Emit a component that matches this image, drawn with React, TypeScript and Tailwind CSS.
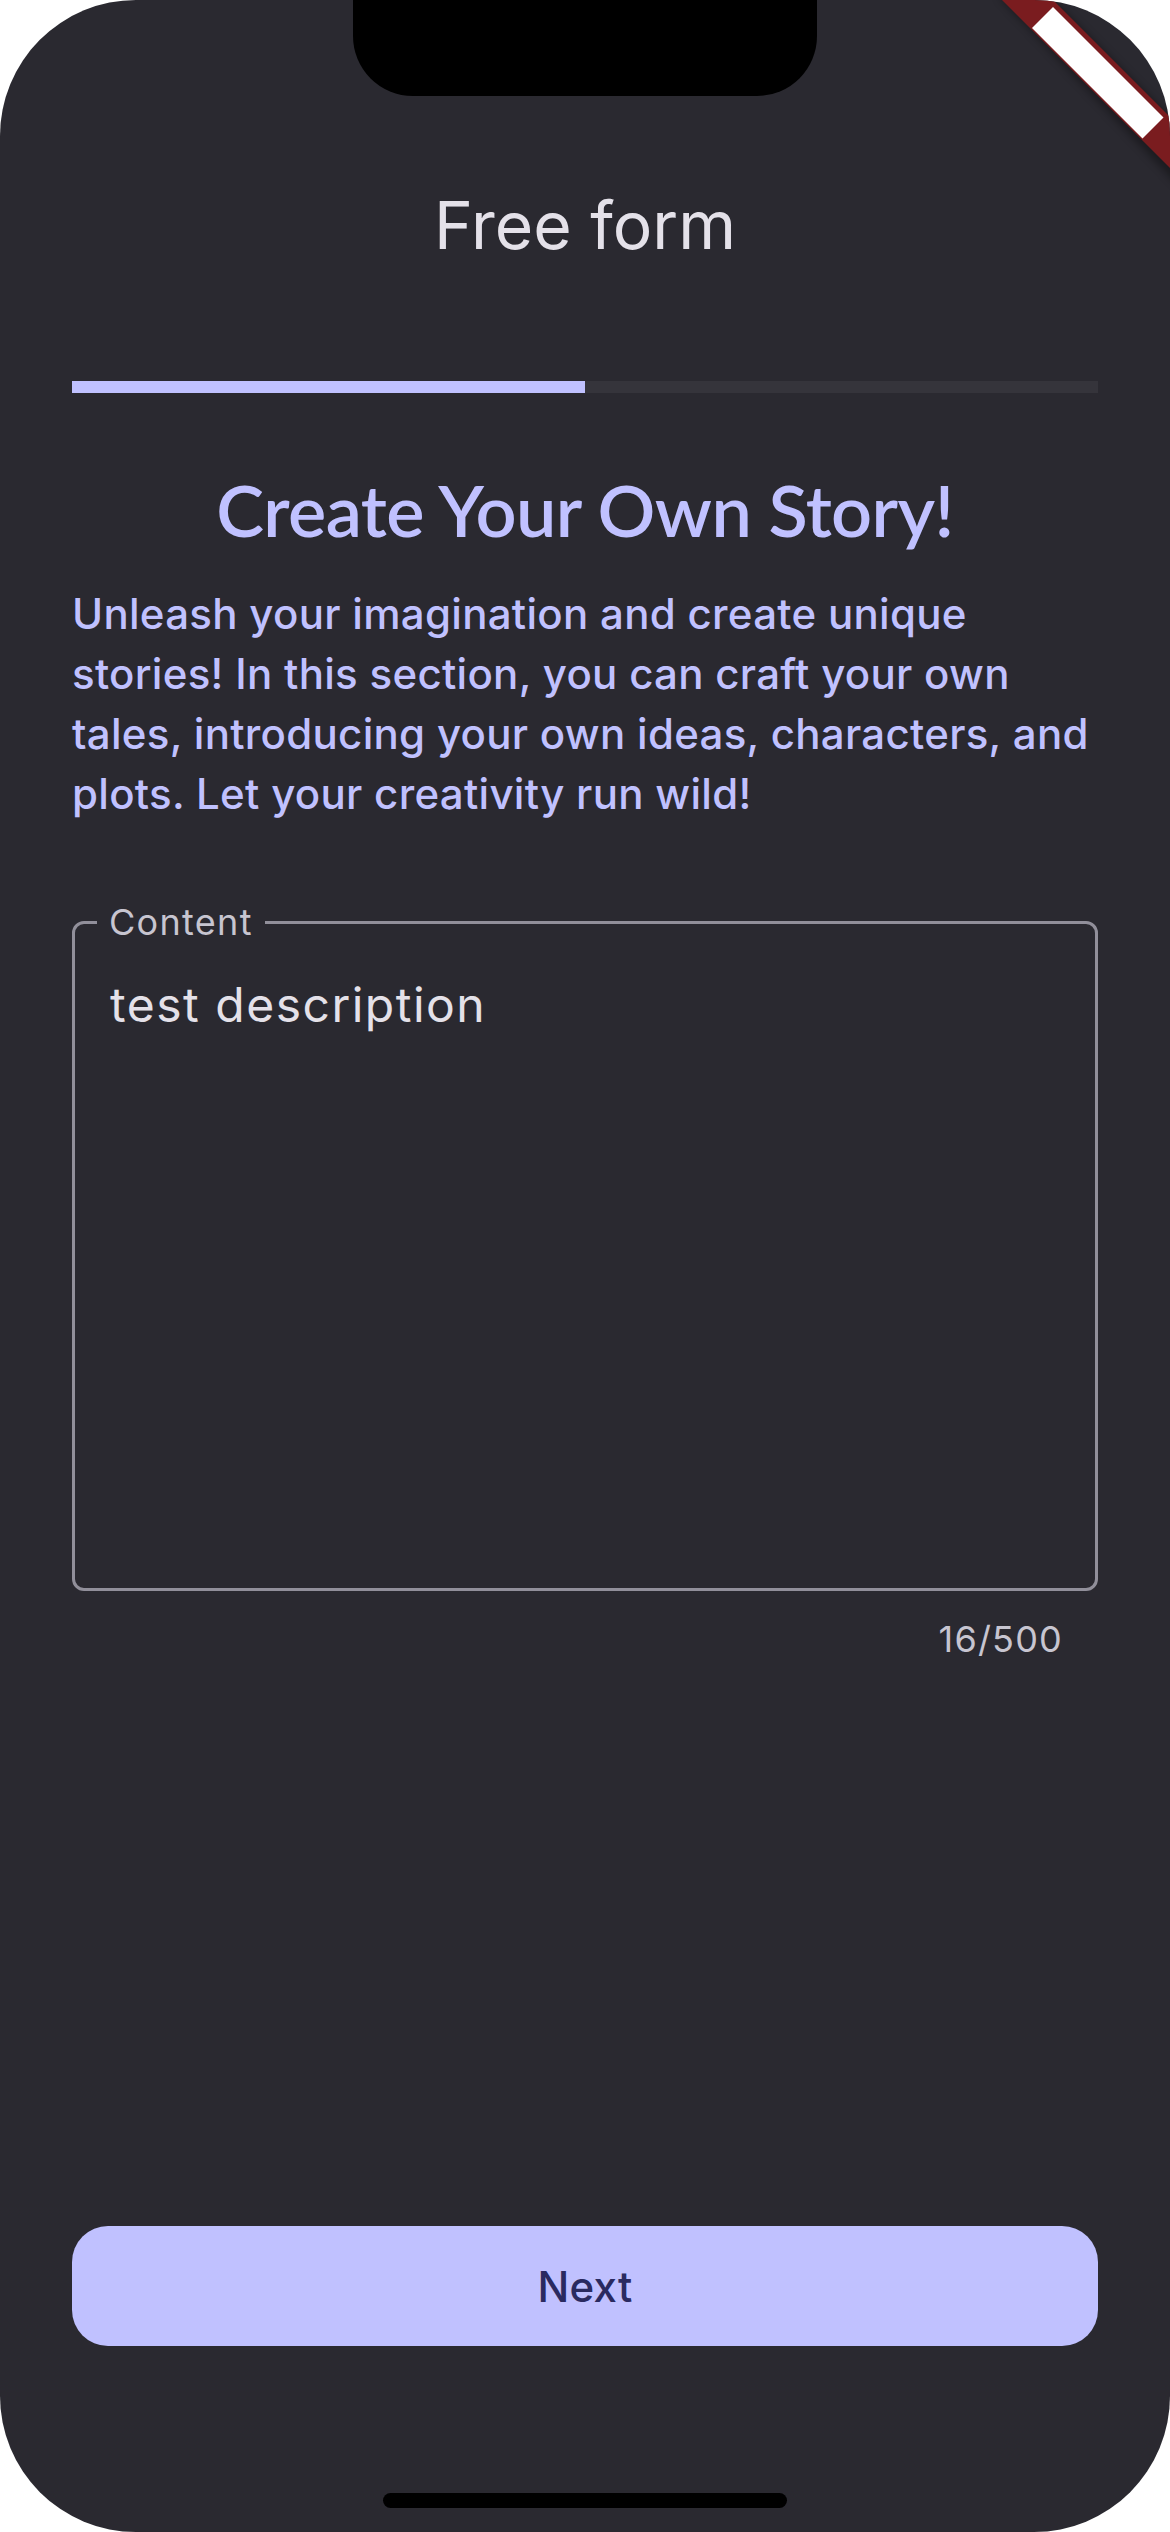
import React from "react";

const DebugBanner = () => (
  <svg
    className="absolute right-0 top-0"
    width="200"
    height="200"
    viewBox="0 0 200 200"
  >
    <defs>
      <filter id="bannerShadow" x="-20%" y="-20%" width="140%" height="140%">
        <feGaussianBlur stdDeviation="4" />
      </filter>
    </defs>
    <polygon
      points="28,-4 83,0 283,200 222,200"
      fill="#000000"
      opacity="0.35"
      filter="url(#bannerShadow)"
    />
    <polygon points="32,0 83,0 283,200 232,200" fill="#7a1c1f" />
    <polygon points="62,28 83,7 193.5,117.5 172.5,138.5" fill="#ffffff" />
  </svg>
);

export default function App() {
  return (
    <div className="relative h-[2532px] w-[1170px] bg-white">
      <div className="relative flex h-full flex-col overflow-hidden rounded-[136px] bg-[#2a2930] font-['Inter','Liberation_Sans',sans-serif]">
        {/* notch */}
        <div className="absolute left-[353px] top-0 h-[96px] w-[464px] rounded-b-[60px] bg-black" />
        <DebugBanner />

        {/* app bar */}
        <header className="mt-[141px] flex h-[168px] items-center justify-center">
          <h1 className="text-[66px] font-normal leading-[84px] text-[#e4e1e9]">
            Free form
          </h1>
        </header>

        <main className="px-[72px]">
          <div className="mt-[72px] flex h-[12px] w-full bg-[#35343b]">
            <div className="h-full w-1/2 bg-[#c0c1ff]" />
          </div>

          <h2 className="mt-[73px] text-center font-['Lato','Noto_Sans',sans-serif] text-[72px] font-semibold leading-[86px] tracking-[-0.6px] text-[#c0c1ff]">
            Create Your Own Story!
          </h2>

          <p className="mt-[32px] text-[42px] font-medium leading-[60px] tracking-[0.3px] text-[#c0c1ff]">
            Unleash your imagination and create unique stories! In this
            section, you can craft your own tales, introducing your own ideas,
            characters, and plots. Let your creativity run wild!
          </p>

          <div className="relative mt-[97px] h-[670px] rounded-[12px] border-[3px] border-[#918f9a] pl-[35px] pt-[45px]">
            <span className="absolute left-[22px] top-[-20px] bg-[#2a2930] px-[12px] text-[36px] leading-[36px] tracking-[1.3px] text-[#c7c5d0]">
              Content
            </span>
            <div className="text-[48px] leading-[72px] tracking-[1.5px] text-[#e4e1e9]">
              test description
            </div>
          </div>

          <div className="mt-[24px] pr-[35px] text-right text-[36px] leading-[48px] tracking-[1.2px] text-[#c7c5d0]">
            16/500
          </div>
        </main>

        <div className="flex-1" />

        <div className="px-[72px]">
          <button className="flex h-[120px] w-full items-center justify-center rounded-[36px] bg-[#c0c1ff] text-[42px] font-medium tracking-[0.3px] text-[#2a2a60]">
            Next
          </button>
        </div>

        <div className="mx-auto mb-[24px] mt-[147px] h-[15px] w-[404px] rounded-full bg-black" />
      </div>
    </div>
  );
}
